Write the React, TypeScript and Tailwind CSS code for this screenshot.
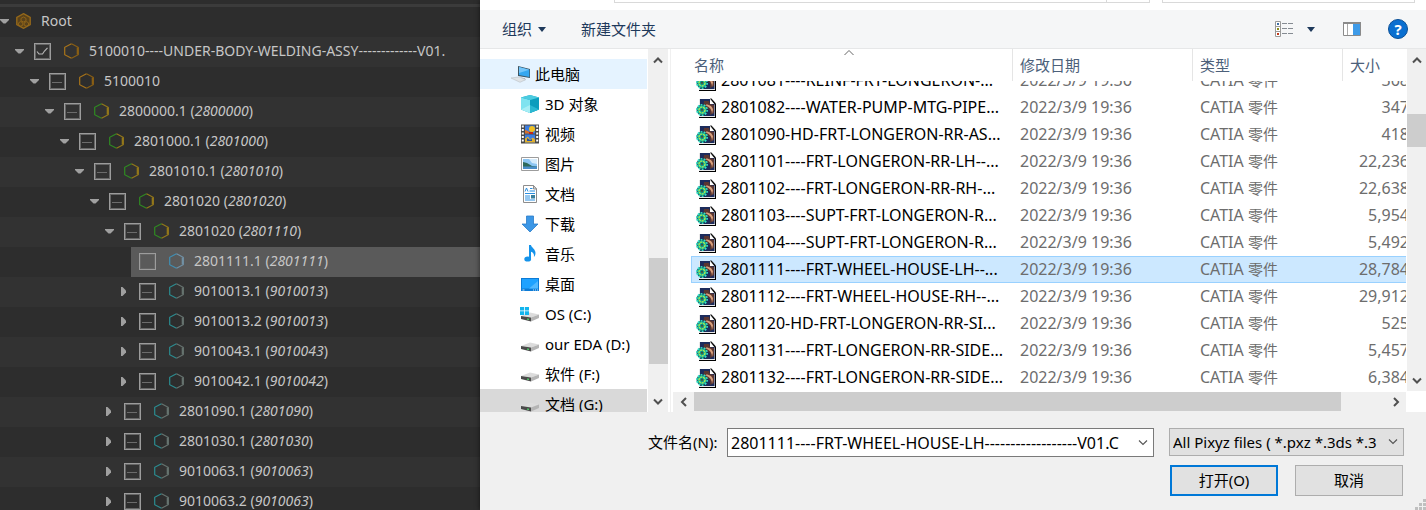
import { useEffect, useRef } from 'react'

type Tone = 'orange' | 'green' | 'teal' | 'blue'

interface TreeNode {
  level: number
  name: string
  ref?: string
  tone: Tone
  state: 'checked' | 'mixed' | 'off'
  open?: boolean
  selected?: boolean
}

const tree: TreeNode[] = [
  { level: 1, name: '5100010----UNDER-BODY-WELDING-ASSY-------------V01.', tone: 'orange', state: 'checked', open: true },
  { level: 2, name: '5100010', tone: 'orange', state: 'mixed', open: true },
  { level: 3, name: '2800000.1', ref: '2800000', tone: 'green', state: 'mixed', open: true },
  { level: 4, name: '2801000.1', ref: '2801000', tone: 'green', state: 'mixed', open: true },
  { level: 5, name: '2801010.1', ref: '2801010', tone: 'green', state: 'mixed', open: true },
  { level: 6, name: '2801020', ref: '2801020', tone: 'green', state: 'mixed', open: true },
  { level: 7, name: '2801020', ref: '2801110', tone: 'green', state: 'mixed', open: true },
  { level: 8, name: '2801111.1', ref: '2801111', tone: 'blue', state: 'off', selected: true },
  { level: 8, name: '9010013.1', ref: '9010013', tone: 'teal', state: 'mixed', open: false },
  { level: 8, name: '9010013.2', ref: '9010013', tone: 'teal', state: 'mixed', open: false },
  { level: 8, name: '9010043.1', ref: '9010043', tone: 'teal', state: 'mixed', open: false },
  { level: 8, name: '9010042.1', ref: '9010042', tone: 'teal', state: 'mixed', open: false },
  { level: 7, name: '2801090.1', ref: '2801090', tone: 'teal', state: 'mixed', open: false },
  { level: 7, name: '2801030.1', ref: '2801030', tone: 'teal', state: 'mixed', open: false },
  { level: 7, name: '9010063.1', ref: '9010063', tone: 'teal', state: 'mixed', open: false },
  { level: 7, name: '9010063.2', ref: '9010063', tone: 'teal', state: 'mixed', open: false },
]

const indent = [
  'pl-0',
  'pl-[15px]',
  'pl-[30px]',
  'pl-[45px]',
  'pl-[60px]',
  'pl-[75px]',
  'pl-[90px]',
  'pl-[105px]',
  'pl-[120px]',
]

const toneColors: Record<Tone, [string, string]> = {
  orange: ['#a8741a', '#8a5f14'],
  green: ['#2f8a22', '#94781a'],
  teal: ['#2b8c90', '#66736f'],
  blue: ['#3f8fb4', '#7191a5'],
}

function Caret({ open }: { open: boolean }) {
  return (
    <svg width="11" height="16" viewBox="0 0 11 16" aria-hidden="true" fill="#a0a0a0">
      {open ? <path d="M0 6h9v1L5.500 10.500h-2L0 7z" /> : <path d="M1 4h1.500L6 7.500v2L2.500 13H1z" />}
    </svg>
  )
}

function Hexagon({ tone }: { tone: Tone }) {
  const [left, right] = toneColors[tone]
  return (
    <svg width="15" height="16" viewBox="0 0 15 16" fill="none" strokeWidth="1.200" className="shrink-0" aria-hidden="true">
      <path d="M7.500 .7L.7 4.300v7.400l6.800 3.600" stroke={left} />
      <path d="M7.500 .7L14.200 4.300v7.400L7.500 15.300" stroke={right} />
      <path d="M13.700 4.500v7" stroke={right} strokeWidth="2" />
    </svg>
  )
}

function RootIcon() {
  return (
    <svg width="15" height="16" viewBox="0 0 15 16" className="shrink-0" aria-hidden="true">
      <path d="M7.500 .7L14.200 4.300v7.400l-6.700 3.600L.8 11.700V4.300z" fill="#5a421a" stroke="#94681a" strokeWidth="1.400" />
      <path d="M7.500 4L10 5.400v2.400L7.500 9 5 7.800V5.400zM4.600 8.600L6.800 9.800v2.400l-2.200 1-2-1V9.800zM10.400 8.600l2.100 1.200v2.400l-2.100 1-2.200-1V9.800z" fill="none" stroke="#94681a" strokeWidth=".9" />
    </svg>
  )
}

function TreeCheck({ node }: { node: TreeNode }) {
  const ref = useRef<HTMLInputElement>(null)
  useEffect(() => {
    if (ref.current) ref.current.indeterminate = node.state === 'mixed'
  }, [node.state])
  return (
    <span className="grid shrink-0">
      <input
        ref={ref}
        type="checkbox"
        defaultChecked={node.state === 'checked'}
        aria-label={node.name}
        className="col-start-1 row-start-1 size-[17px] appearance-none border border-[#9c9c9c] outline outline-1 -outline-offset-2 outline-[#666]"
      />
      <svg width="17" height="17" viewBox="0 0 17 17" fill="none" className="pointer-events-none col-start-1 row-start-1" aria-hidden="true">
        {node.state === 'checked' && <path d="M3 8.500l2 2.500h3.500l2-3 3-3.200" stroke="#b5b5b5" strokeWidth="1.200" />}
        {node.state === 'mixed' && <path d="M3 9.500h10" stroke="#6c6c6c" />}
      </svg>
    </span>
  )
}

function ModelTree() {
  return (
    <aside className="flex w-[480px] shrink-0 flex-col overflow-hidden bg-[#2d2d2d] font-['Noto_Sans',sans-serif] text-sm text-[#c6c6c6]">
      <div className="h-[7px] shrink-0 border-b-[3px] border-[#3b3b3b]" />
      <ul className="min-h-0 flex-1 overflow-hidden">
        <li className="flex h-[30px] items-center pb-[2px]">
          <Caret open />
          <div className="flex items-center gap-[10px] pl-[5px]">
            <RootIcon />
            <span className="leading-5">Root</span>
          </div>
        </li>
        {tree.map((node, i) => (
          <li key={i} className={`flex h-[30px] odd:bg-[#323232] even:bg-[#2d2d2d] nth-[2n+2]:bg-[#323232] nth-[2n+1]:bg-[#2d2d2d] ${indent[node.level]}`}>
            <button type="button" aria-label="toggle" className="flex w-[11px] shrink-0 items-center pb-[2px]">
              {node.open !== undefined && <Caret open={node.open} />}
            </button>
            <div className={`flex min-w-0 flex-1 items-center pb-[2px] pl-2 ${node.selected ? 'bg-[#5a5a5a]' : ''}`}>
              <TreeCheck node={node} />
              <span className="flex items-center gap-[10px] pl-[13px] whitespace-nowrap">
                <Hexagon tone={node.tone} />
                <span className="leading-5">
                  {node.name}
                  {node.ref && (
                    <>
                      {' ('}
                      <i>{node.ref}</i>)
                    </>
                  )}
                </span>
              </span>
            </div>
          </li>
        ))}
      </ul>
    </aside>
  )
}

function ComputerIcon() {
  return (
    <svg width="20" height="18" viewBox="0 0 20 18" aria-hidden="true">
      <path d="M7 1l12 3v9L7 11z" fill="#3d5563" />
      <path d="M8 2l10.300 2.700v7.300L8 10z" fill="#35a7f0" />
      <path d="M8 2l10.300 2.700L8 8z" fill="#74c6fa" />
      <path d="M10 12.500l4 .7v2l-4-.6z" fill="#9aa4aa" />
      <path d="M0 13l8-1 7 2.500-6 2.800z" fill="#dfe3e6" stroke="#b8bfc4" strokeWidth=".6" />
    </svg>
  )
}

function CubeIcon() {
  return (
    <svg width="20" height="20" viewBox="0 0 20 20" aria-hidden="true">
      <path d="M10 1l9 2.500v12L10 19l-9-3.500v-12z" fill="#19a9c6" />
      <path d="M1 3.500L10 6v13l-9-3.500z" fill="#7fe3f0" />
      <path d="M10 6l9-2.500v12L10 19z" fill="#0d9dbd" />
      <path d="M1 3.500L10 1l9 2.500L10 6z" fill="#4ccbe0" />
      <path d="M10 11l9 4.500L10 19z" fill="#2bb8d2" />
      <path d="M10 11l-9 4.500L10 19z" fill="#a6eef5" />
    </svg>
  )
}

function VideoIcon() {
  return (
    <svg width="20" height="20" viewBox="0 0 20 20" aria-hidden="true">
      <path d="M1 .5h18v19H1z" fill="#4a4a4a" />
      <path d="M5 1.500h10v8H5zM5 10.500h10v8H5z" fill="#3c7de0" />
      <path d="M2.800 1.500v17M17.200 1.500v17" stroke="#fff" strokeWidth="2" strokeDasharray="2 1.500" />
      <circle cx="12" cy="5" r="3" fill="#f0c020" />
      <path d="M5 9.500V6l3 1 3 2.500z" fill="#d8702a" />
      <path d="M9 8h4v2H9z" fill="#c02818" />
      <path d="M5 18.500v-4l3-2 2 3 3-2 2 2v3z" fill="#e0b030" />
      <path d="M7 14l3 2 2-1v2H7z" fill="#2453a8" />
    </svg>
  )
}

function PictureIcon() {
  return (
    <svg width="20" height="20" viewBox="0 0 20 20" aria-hidden="true">
      <path d="M1.500 3.500h17v13h-17z" fill="#fff" stroke="#9c9c9c" />
      <path d="M3 5h14v10H3z" fill="#8cc5f2" />
      <path d="M9 5h8v5l-5-1z" fill="#d5ebfb" />
      <path d="M3 8l4 1 5 3 5 .5V13H3z" fill="#2f6a5b" />
      <path d="M3 12.500h14V15H3z" fill="#4b8ec9" />
    </svg>
  )
}

function DocumentIcon() {
  return (
    <svg width="20" height="20" viewBox="0 0 20 20" aria-hidden="true">
      <path d="M3.500 1.500h10L16.500 5v13.500h-13z" fill="#fff" stroke="#8d8d8d" />
      <path d="M13.500 1.500V5h3z" fill="#e2e2e2" stroke="#8d8d8d" />
      <path d="M5 7.500l1.500-3.500L8 7.500M10 4.500h2.500M9.500 7h5.500M5 9.500h10M5 12h5M5 14h5M5 16h10" stroke="#2b8fe0" fill="none" />
      <path d="M11 11h4v3.500h-4z" fill="#3a7f9c" />
    </svg>
  )
}

function DownloadIcon() {
  return (
    <svg width="20" height="20" viewBox="0 0 20 20" aria-hidden="true">
      <path d="M6.500 2h7v8h4.500l-8 8-8-8h4.500z" fill="#3c97e6" stroke="#2a7bc8" strokeWidth=".8" />
    </svg>
  )
}

function MusicIcon() {
  return (
    <svg width="20" height="20" viewBox="0 0 20 20" aria-hidden="true" fill="#1593ea">
      <path d="M9 1h2c.3 2.500 4.500 4 4.500 8 0 2-.8 3.200-1.600 4 .4-3-.6-4.500-2.900-5.200V15H9z" />
      <ellipse cx="7.700" cy="15" rx="3.400" ry="2.600" />
    </svg>
  )
}

function DesktopIcon() {
  return (
    <svg width="20" height="20" viewBox="0 0 20 20" aria-hidden="true">
      <path d="M1 4h18v13H1z" fill="#0c7bd6" />
      <path d="M2 5h16v9.500H2z" fill="#1fa2ff" />
      <path d="M9 14.500L18 7v7.500z" fill="#52b9ff" />
      <path d="M2.500 16h2M13 16h1M15 16h1M17 16h1" stroke="#fff" strokeWidth=".8" />
    </svg>
  )
}

function DriveIcon({ system }: { system?: boolean }) {
  return (
    <svg width="20" height="20" viewBox="0 0 20 20" aria-hidden="true">
      <path d="M1 12l9-3.500 9 2-8 3z" fill="#dcdcdc" />
      <path d="M1 12l10 1.500v4L1 15z" fill="#4a4a4a" />
      <path d="M11 13.500l8-3v3.500l-8 3.500z" fill="#b4b4b4" />
      <path d="M7 15l2 .4" stroke="#4ee06a" strokeWidth="1.200" />
      {system && <path d="M0 3h4v3.500H0zM4.800 3H9v3.500H4.800zM0 7.300h4V11H0zM4.800 7.300H9V11H4.800z" fill="#12b5ee" />}
    </svg>
  )
}

const places = [
  { label: '3D 对象', icon: <CubeIcon /> },
  { label: '视频', icon: <VideoIcon /> },
  { label: '图片', icon: <PictureIcon /> },
  { label: '文档', icon: <DocumentIcon /> },
  { label: '下载', icon: <DownloadIcon /> },
  { label: '音乐', icon: <MusicIcon /> },
  { label: '桌面', icon: <DesktopIcon /> },
  { label: 'OS (C:)', icon: <DriveIcon system /> },
  { label: 'our EDA (D:)', icon: <DriveIcon /> },
  { label: '软件 (F:)', icon: <DriveIcon /> },
  { label: '文档 (G:)', icon: <DriveIcon />, current: true },
]

function Chevron({ dir, thin }: { dir: 'up' | 'down' | 'left' | 'right'; thin?: boolean }) {
  const paths = { up: 'M2 8.500l4-4 4 4', down: 'M2 3.500l4 4 4-4', left: 'M8 2L4 6l4 4', right: 'M4 2l4 4-4 4' }
  return (
    <svg width="12" height="12" viewBox="0 0 12 12" fill="none" stroke={thin ? '#555' : '#505050'} strokeWidth={thin ? 1.1 : 2} aria-hidden="true">
      <path d={paths[dir]} />
    </svg>
  )
}

function Places() {
  return (
    <div className="flex shrink-0 border-r border-[#f0f0f0] pr-[2px]">
      <nav className="w-[168px] overflow-hidden pt-[10px] pr-px">
        <ul>
          <li>
            <a href="#pc" className="flex h-[30px] items-center gap-1 bg-[#e5f3ff] pl-[31px]">
              <ComputerIcon />
              此电脑
            </a>
          </li>
          {places.map((p) => (
            <li key={p.label}>
              <a href="#place" className={`flex h-[30px] items-center gap-[5px] pl-10 whitespace-nowrap ${p.current ? 'bg-[#d9d9d9]' : ''}`}>
                {p.icon}
                {p.label}
              </a>
            </li>
          ))}
        </ul>
      </nav>
      <div className="flex w-[20px] flex-col items-center bg-[#f0f0f0]">
        <button type="button" aria-label="up" className="flex h-[21px] w-full items-center justify-center">
          <Chevron dir="up" />
        </button>
        <div className="flex-[188]" />
        <div className="w-[19px] flex-[106] bg-[#cdcdcd]" />
        <div className="flex-[27]" />
        <button type="button" aria-label="down" className="flex h-[21px] w-full items-center justify-center">
          <Chevron dir="down" />
        </button>
      </div>
    </div>
  )
}

const files: [string, string][] = [
  ['2801081----REINF-FRT-LONGERON-...', '368'],
  ['2801082----WATER-PUMP-MTG-PIPE...', '347'],
  ['2801090-HD-FRT-LONGERON-RR-AS...', '418'],
  ['2801101----FRT-LONGERON-RR-LH--...', '22,236'],
  ['2801102----FRT-LONGERON-RR-RH-...', '22,638'],
  ['2801103----SUPT-FRT-LONGERON-R...', '5,954'],
  ['2801104----SUPT-FRT-LONGERON-R...', '5,492'],
  ['2801111----FRT-WHEEL-HOUSE-LH--...', '28,784'],
  ['2801112----FRT-WHEEL-HOUSE-RH--...', '29,912'],
  ['2801120-HD-FRT-LONGERON-RR-SI...', '525'],
  ['2801131----FRT-LONGERON-RR-SIDE...', '5,457'],
  ['2801132----FRT-LONGERON-RR-SIDE...', '6,384'],
]

function PartIcon() {
  return (
    <svg width="20" height="20" viewBox="0 0 20 20" className="shrink-0" aria-hidden="true">
      <path d="M3 1h12l5 5v14H3z" fill="#000" />
      <path d="M3 1h12l4 4v14H3z" fill="#e8e8e8" />
      <path d="M4 1h10v5h4.500v12H4z" fill="#1d2c5c" />
      <path d="M8 3h5l1 3 4 1v8l-4 2c1-5-1-7-6.500-8z" fill="#5b3630" />
      <path d="M10 6.500c4 0 6.500 2.500 7 5L16 16c0-4-2-7-6-8.500z" fill="#d9a07c" />
      <path d="M14 .5h1.500l4 4.500v1.500h-1z" fill="#111" />
      <path d="M14 2v4h4z" fill="#fff" />
      <circle cx="6" cy="12" r="5" fill="#19b89a" stroke="#0a2a38" strokeWidth=".8" />
      <circle cx="6" cy="12" r="5.200" fill="none" stroke="#35e0c8" strokeWidth="1.600" strokeDasharray="1.900 1.300" />
      <circle cx="6" cy="12" r="3" fill="none" stroke="#c6ee3c" strokeWidth="1.200" strokeDasharray="2 1" />
      <circle cx="6" cy="12" r="1.400" fill="#0c2f46" />
      <circle cx="6" cy="12" r=".6" fill="#e9f24a" />
    </svg>
  )
}

function FileTable() {
  const scroller = useRef<HTMLDivElement>(null)
  useEffect(() => {
    if (scroller.current) scroller.current.scrollTop = 14
  }, [])
  const head = 'sticky top-0 z-10 h-8 border-r border-[#e5e5e5] bg-white py-0 pr-0 text-left align-middle text-[15px] font-normal text-[#4c607a]'
  return (
    <div className="flex min-w-0 flex-1">
      <div className="flex min-w-0 flex-1 flex-col">
        <div ref={scroller} className="min-h-0 flex-1 overflow-hidden pb-px pl-5">
          <table className="w-[calc(100%+3px)] table-fixed border-separate border-spacing-0">
            <colgroup>
              <col />
              <col className="w-[180px]" />
              <col className="w-[150px]" />
              <col className="w-[66px]" />
            </colgroup>
            <thead>
              <tr>
                <th className={`${head} pl-[3px]`}>
                  名称
                  <svg width="12" height="7" viewBox="0 0 12 7" fill="none" stroke="#666" className="absolute top-0 left-[152px]" aria-hidden="true">
                    <path d="M1.500 6L6 1.500 10.500 6" />
                  </svg>
                </th>
                <th className={`${head} pl-[7px]`}>修改日期</th>
                <th className={`${head} pl-[7px]`}>类型</th>
                <th className={`${head} pl-[7px]`}>大小</th>
              </tr>
            </thead>
            <tbody>
              {files.map(([name, size]) => {
                const on = name.startsWith('2801111')
                const cell = on
                  ? 'h-[27px] py-0 pr-0 border-y border-[#99d1ff] bg-[#cce8ff] leading-[25px] whitespace-nowrap'
                  : 'h-[27px] py-0 pr-0 leading-[27px] whitespace-nowrap'
                return (
                  <tr key={name} className="text-base text-[#6d6d6d]">
                    <td className={`${cell} ${on ? 'border-l pl-1' : 'pl-[5px]'}`}>
                      <div className="flex items-center gap-[5px] text-black">
                        <PartIcon />
                        {name}
                      </div>
                    </td>
                    <td className={`${cell} pl-[7px]`}>2022/3/9 19:36</td>
                    <td className={`${cell} pl-[7px]`}>
                      CATIA <span className="text-[15px]">零件</span>
                    </td>
                    <td className={`${cell} pl-[7px] text-right`}>{size}</td>
                  </tr>
                )
              })}
            </tbody>
          </table>
        </div>
        <div className="ml-[2px] flex h-5 shrink-0 items-stretch bg-[#f0f0f0]">
          <button type="button" aria-label="left" className="flex w-[21px] items-center justify-center">
            <Chevron dir="left" />
          </button>
          <div className="mb-px flex-[647] bg-[#cdcdcd]" />
          <div className="flex-[44]" />
          <button type="button" aria-label="right" className="flex w-[21px] items-center justify-center">
            <Chevron dir="right" />
          </button>
        </div>
      </div>
      <div className="ml-px flex w-[19px] flex-col items-center pb-[21px]">
        <button type="button" aria-label="up" className="flex h-[21px] w-full items-center justify-center bg-[#f0f0f0]">
          <Chevron dir="up" />
        </button>
        <div className="w-full flex-[44] bg-[#f0f0f0]" />
        <div className="w-full flex-[33] bg-[#cdcdcd]" />
        <div className="w-full flex-[223] bg-[#f0f0f0]" />
        <button type="button" aria-label="down" className="flex h-[21px] w-full items-center justify-center bg-[#f0f0f0]">
          <Chevron dir="down" />
        </button>
      </div>
    </div>
  )
}

function DownTriangle() {
  return (
    <svg width="8" height="5" viewBox="0 0 8 5" fill="#1e395b" aria-hidden="true">
      <path d="M0 0h8L4 5z" />
    </svg>
  )
}

function Toolbar() {
  return (
    <div className="flex h-[39px] shrink-0 items-center border-b border-[#e6e7e8] bg-[#f5f6f7] pr-[18px] pl-[22px] text-[#1e395b]">
      <button type="button" className="flex items-center gap-[6px]">
        组织
        <DownTriangle />
      </button>
      <button type="button" className="ml-[35px]">新建文件夹</button>
      <div className="flex-1" />
      <button type="button" aria-label="view" className="flex items-center gap-[14px]">
        <svg width="18" height="16" viewBox="0 0 18 16" fill="none" aria-hidden="true">
          <path d="M.5 .5h5v15h-5zM.5 5.500h5M.5 10.500h5" stroke="#9a9a9a" fill="#fff" />
          <path d="M7 2.500h5M13 2.500h5M7 7.500h5M13 7.500h5M7 12.500h5M13 12.500h5" stroke="#858b92" />
          <path d="M2 2h2v2H2z" fill="#3d6ea5" />
          <path d="M2 7h2v2H2z" fill="#8a8d1c" />
          <path d="M2 12h2v2H2z" fill="#c0391b" />
        </svg>
        <DownTriangle />
      </button>
      <button type="button" aria-label="preview" className="ml-7">
        <svg width="18" height="14" viewBox="0 0 18 14" aria-hidden="true">
          <path d="M.5 .5h17v13H.5z" fill="#fff" stroke="#8a8a8a" />
          <path d="M0 0h18v2H0z" fill="#8a8a8a" />
          <path d="M4.500 2v11" stroke="#aaa" />
          <path d="M10 2h7v11h-7z" fill="#3f9be8" />
        </svg>
      </button>
      <button type="button" aria-label="help" className="ml-[27px] flex size-5 items-center justify-center rounded-full border border-[#0a4f96] bg-[#0a6fd0] text-[15px] leading-none font-bold text-white">
        ?
      </button>
    </div>
  )
}

function Footer() {
  return (
    <div className="flex shrink-0 flex-col gap-2 bg-[#f0f0f0] pt-4 pb-[14px]">
      <div className="flex items-start pr-[22px] pl-[168px]">
        <label htmlFor="file-name" className="mr-2 w-[71px] shrink-0 leading-[29px] whitespace-nowrap">
          文件名(N):
        </label>
        <div className="mr-[15px] flex h-[29px] min-w-0 flex-1 border border-[#7a7a7a] bg-white">
          <input
            id="file-name"
            defaultValue="2801111----FRT-WHEEL-HOUSE-LH------------------V01.C"
            className="min-w-0 flex-1 pl-[3px] text-base leading-6 outline-none"
          />
          <button type="button" aria-label="history" className="flex w-5 items-center justify-center">
            <Chevron dir="down" thin />
          </button>
        </div>
        <div className="grid w-[235px] shrink-0 items-center">
          <select aria-label="file type" className="col-start-1 row-start-1 h-7 w-full appearance-none border border-[#adadad] bg-[#e1e1e1] pr-5 pl-[3px] text-[15px] leading-6">
            <option>All Pixyz files ( *.pxz *.3ds *.3</option>
          </select>
          <span className="pointer-events-none col-start-1 row-start-1 mr-[5px] justify-self-end">
            <Chevron dir="down" thin />
          </span>
        </div>
      </div>
      <div className="flex justify-end gap-[17px] pr-[23px]">
        <button type="button" className="h-[31px] w-[108px] border-2 border-[#0078d7] bg-[#e1e1e1]">打开(O)</button>
        <button type="button" className="h-[31px] w-[108px] border border-[#adadad] bg-[#e1e1e1]">取消</button>
      </div>
    </div>
  )
}

export default function App() {
  return (
    <div className="flex h-screen overflow-hidden">
      <ModelTree />
      <main className="relative flex min-w-0 flex-1 flex-col bg-white font-['Noto_Sans','Noto_Sans_CJK_SC',sans-serif] text-[15px] text-black shadow-[0_0_5px_rgba(0,0,0,0.6)]">
        <div className="flex h-[10px] shrink-0 items-start gap-3 pr-[11px] pl-[134px]">
          <div className="flex h-[3px] flex-1 border-x border-b border-[#d9d9d9]">
            <div className="flex-1" />
            <div className="w-[43px] border-l border-[#d9d9d9]" />
          </div>
          <div className="h-[3px] w-[253px] border-x border-b border-[#d9d9d9]" />
        </div>
        <Toolbar />
        <div className="flex min-h-0 flex-1">
          <Places />
          <FileTable />
        </div>
        <Footer />
        <svg width="11" height="11" viewBox="0 0 11 11" fill="#bfbfbf" className="absolute right-0 bottom-0" aria-hidden="true">
          <path d="M8 0h3v3H8zM4 4h3v3H4zM8 4h3v3H8zM0 8h3v3H0zM4 8h3v3H4zM8 8h3v3H8z" />
        </svg>
      </main>
    </div>
  )
}
